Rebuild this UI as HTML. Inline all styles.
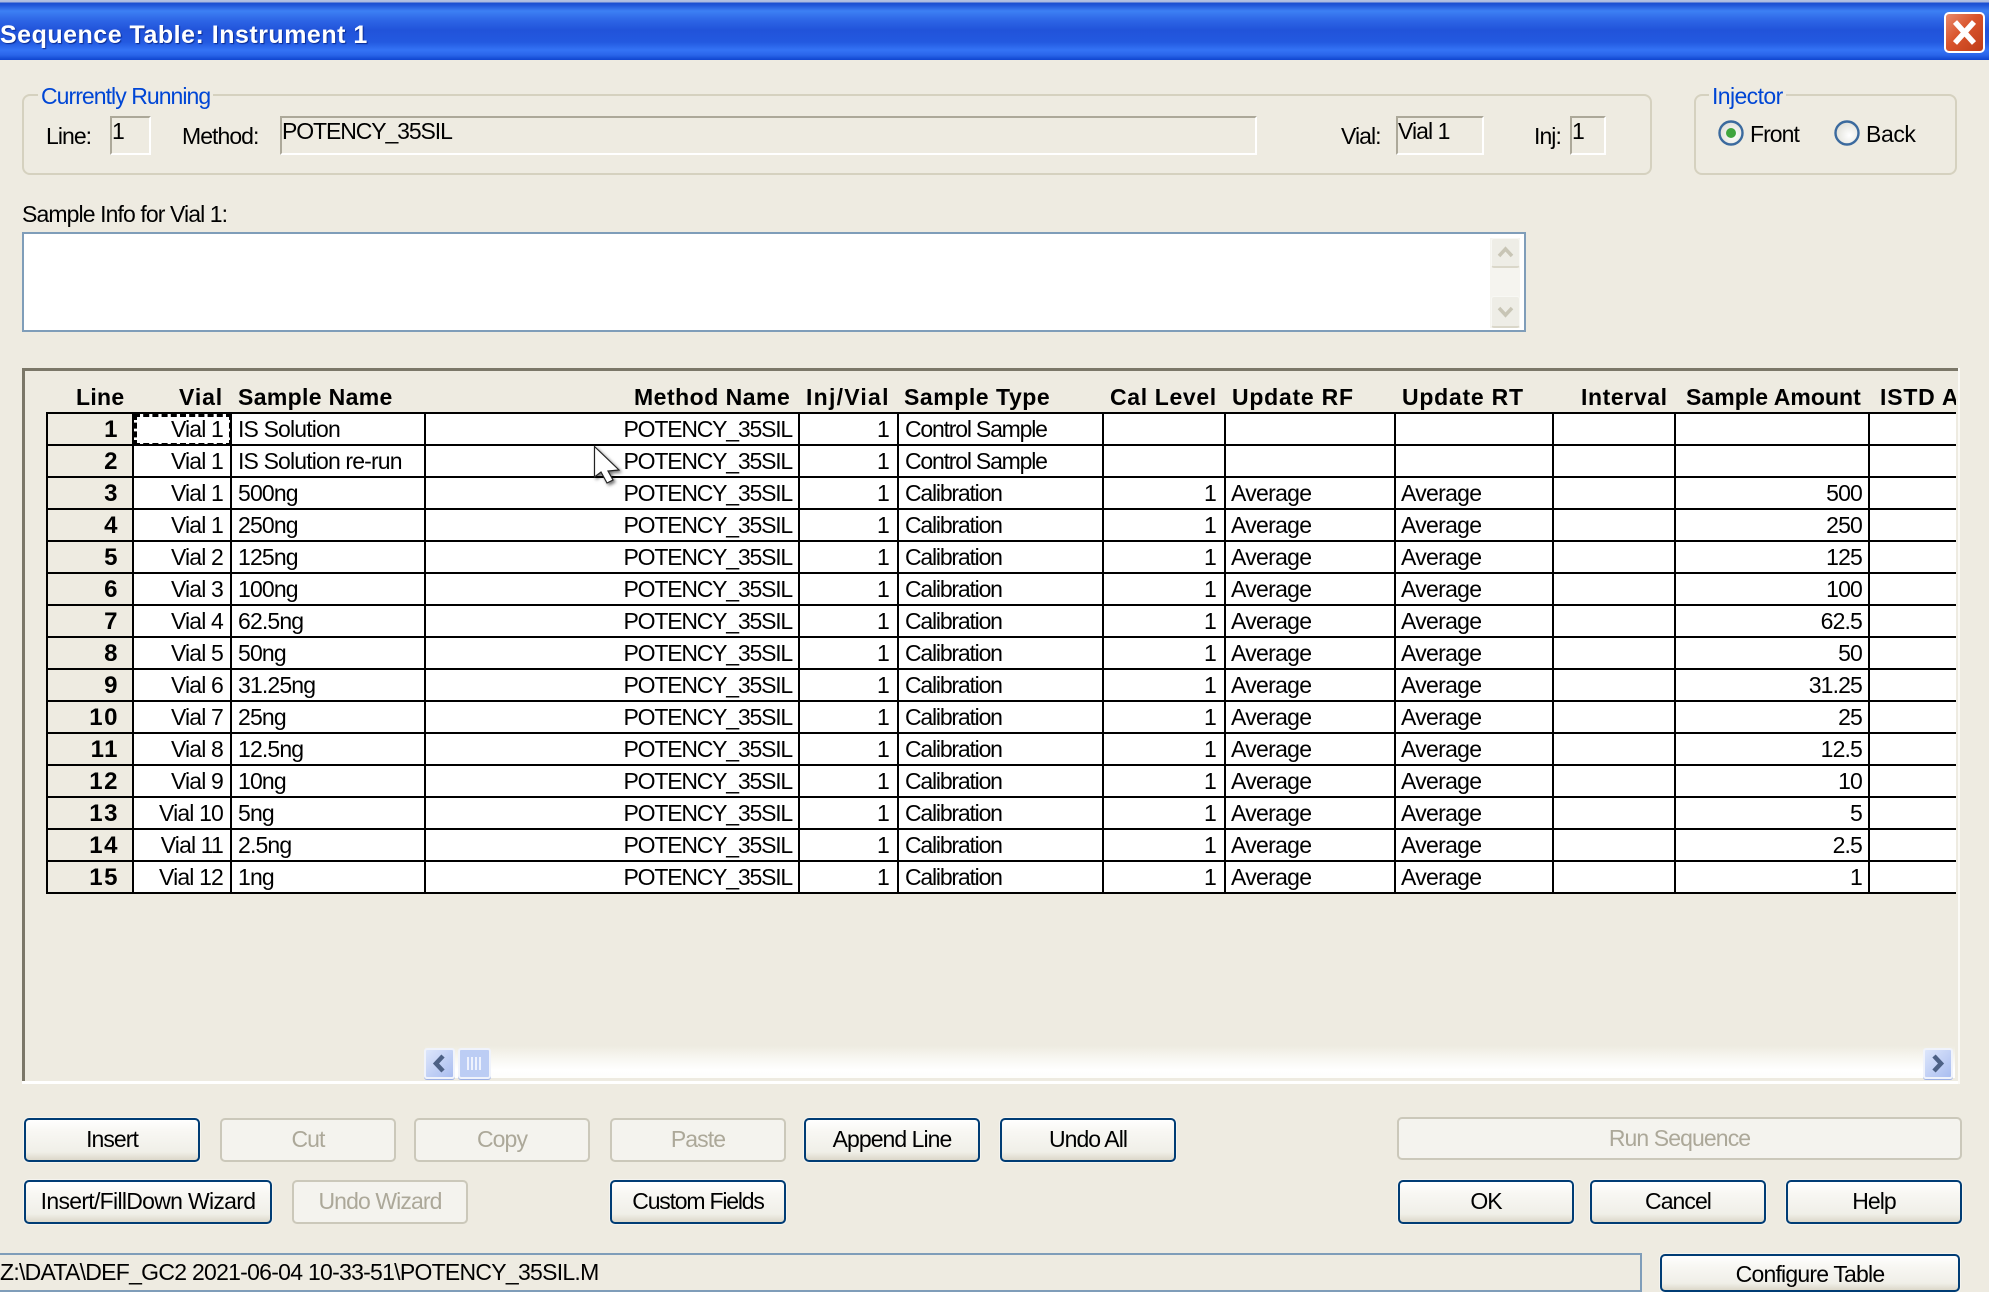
<!DOCTYPE html>
<html>
<head>
<meta charset="utf-8">
<style>
html,body{margin:0;padding:0;background:#eeebe1;}
#p{position:relative;width:1989px;height:1292px;overflow:hidden;background:#eeebe1;font-family:"Liberation Sans",sans-serif;color:#000;}
#p div{position:absolute;box-sizing:border-box;}
.t{white-space:nowrap;font-size:23px;letter-spacing:-.95px;line-height:26px;}
.bl{color:#0046d5;background:#eeebe1;padding:0 3px;}
.gb{border:2px solid #d5d1bf;border-radius:8px;}
.in{border:2px solid;border-color:#aca899 #fff #fff #aca899;background:#eeebe1;}
.h{font-weight:bold;white-space:nowrap;font-size:23px;line-height:26px;top:384px;}
.b{border:2px solid #003c74;border-radius:5px;background:linear-gradient(#fff 0,#f8f7f3 30%,#f0efe8 80%,#dcd8ca 100%);text-align:center;font-size:23px;letter-spacing:-.95px;line-height:38px;white-space:nowrap;box-shadow:0 0 0 1px #f5f4ef;}
.d{border:2px solid #cbc8ba;border-radius:5px;background:#f4f3ee;color:#aca899;text-align:center;font-size:23px;letter-spacing:-.9px;line-height:38px;white-space:nowrap;}
table{border-collapse:separate;border-spacing:0;table-layout:fixed;width:1909px;border-top:2px solid #000;border-left:2px solid #000;background:#fff;}
td{box-sizing:border-box;height:32px;padding:0;border-right:2px solid #000;border-bottom:2px solid #000;font-size:23px;letter-spacing:-.85px;line-height:26px;white-space:nowrap;overflow:hidden;vertical-align:middle;}
td.n{background:#eeebe1;font-weight:bold;font-size:24px;text-align:right;padding-right:13px;padding-top:2px;letter-spacing:1.5px;}
td.v{text-align:right;padding-right:7px;}
td.s{padding-left:6px;}
td.m{text-align:right;padding-right:6px;letter-spacing:-1.2px;}
td.i{text-align:right;padding-right:8px;}
td.y{padding-left:6px;letter-spacing:-1.2px;}
td.c{text-align:right;padding-right:8px;}
td.r{padding-left:5px;letter-spacing:-.7px;}
td.q{padding-left:5px;letter-spacing:-.7px;}
td.a{text-align:right;padding-right:6px;}
td.f{outline:3px dashed #000;outline-offset:-3px;}
td:last-child{border-right:0;}
</style>
</head>
<body>
<div id="p">
<!-- title bar -->
<div style="left:0;top:0;width:1989px;height:60px;background:linear-gradient(#b4c2e2 0,#a9b9e0 2px,#1b4fd0 3px,#1f56d8 5px,#3d80f4 11px,#2e66e6 20px,#2153da 30px,#2359e0 42px,#3473f5 50px,#2a65ea 55px,#0f45cf 60px);"></div>
<div class="t" style="left:0;top:20px;color:#fff;font-weight:bold;font-size:25px;letter-spacing:.5px;line-height:30px;text-shadow:1px 1px 1px #0a2a90;">Sequence Table: Instrument 1</div>
<div style="left:1944px;top:12px;width:41px;height:41px;border:2px solid #fff;border-radius:5px;background:linear-gradient(135deg,#e98a6c 0,#d9542c 45%,#bf3d18 100%);"></div>
<svg style="position:absolute;left:1944px;top:12px" width="41" height="41"><path d="M11 10 L30 31 M30 10 L11 31" stroke="#fff" stroke-width="5.5" fill="none"/></svg>

<!-- Currently Running -->
<div class="gb" style="left:22px;top:94px;width:1630px;height:81px;"></div>
<div class="t bl" style="left:38px;top:83px;">Currently Running</div>
<div class="t" style="left:46px;top:123px;">Line:</div>
<div class="in" style="left:110px;top:116px;width:41px;height:39px;"></div>
<div class="t" style="left:112px;top:118px;">1</div>
<div class="t" style="left:182px;top:123px;">Method:</div>
<div class="in" style="left:280px;top:116px;width:977px;height:39px;"></div>
<div class="t" style="left:282px;top:118px;letter-spacing:-1.1px;">POTENCY_35SIL</div>
<div class="t" style="left:1341px;top:123px;">Vial:</div>
<div class="in" style="left:1396px;top:116px;width:88px;height:39px;"></div>
<div class="t" style="left:1398px;top:118px;">Vial 1</div>
<div class="t" style="left:1534px;top:123px;">Inj:</div>
<div class="in" style="left:1570px;top:116px;width:36px;height:39px;"></div>
<div class="t" style="left:1572px;top:118px;">1</div>

<!-- Injector -->
<div class="gb" style="left:1694px;top:94px;width:263px;height:81px;"></div>
<div class="t bl" style="left:1709px;top:83px;letter-spacing:-.6px;">Injector</div>
<svg style="position:absolute;left:1716px;top:118px" width="30" height="30"><defs><radialGradient id="rg" cx=".6" cy=".6" r=".7"><stop offset="0" stop-color="#fff"/><stop offset="1" stop-color="#dcdcd4"/></radialGradient></defs><circle cx="15" cy="15" r="11.5" fill="url(#rg)" stroke="#3b6a9e" stroke-width="2.4"/><circle cx="15" cy="15" r="5" fill="#3fa53f"/></svg>
<div class="t" style="left:1750px;top:121px;">Front</div>
<svg style="position:absolute;left:1832px;top:118px" width="30" height="30"><circle cx="15" cy="15" r="11.5" fill="url(#rg)" stroke="#3b6a9e" stroke-width="2.4"/></svg>
<div class="t" style="left:1866px;top:121px;letter-spacing:-.4px;">Back</div>

<!-- sample info -->
<div class="t" style="left:22px;top:201px;letter-spacing:-.9px;">Sample Info for Vial 1:</div>
<div style="left:22px;top:232px;width:1504px;height:100px;border:2px solid #7f9db9;background:#fff;"></div>
<div style="left:1490px;top:238px;width:30px;height:90px;background:#f5f4ef;"></div>
<div style="left:1491px;top:238px;width:29px;height:30px;border:1px solid #f8f8f4;border-bottom:2px solid #dad7c9;border-radius:3px;background:#eeede6;"></div>
<svg style="position:absolute;left:1491px;top:238px" width="29" height="30"><path d="M8 18 L14.5 11 L21 18" stroke="#c8c5b5" stroke-width="3.5" fill="none"/></svg>
<div style="left:1491px;top:296px;width:29px;height:32px;border:1px solid #f8f8f4;border-bottom:2px solid #dad7c9;border-radius:3px;background:#eeede6;"></div>
<svg style="position:absolute;left:1491px;top:295px" width="29" height="32"><path d="M8 13 L14.5 20 L21 13" stroke="#c8c5b5" stroke-width="3.5" fill="none"/></svg>

<!-- grid panel -->
<div style="left:22px;top:368px;width:1936px;height:3px;background:#7b7768;"></div>
<div style="left:22px;top:368px;width:3px;height:714px;background:#7b7768;"></div>
<div style="left:22px;top:1081px;width:1938px;height:3px;background:#fff;"></div>
<div style="left:1958px;top:368px;width:2px;height:716px;background:#fbfaf6;"></div>

<div class="h" style="left:76px;letter-spacing:.3px;">Line</div>
<div class="h" style="left:179px;letter-spacing:.9px;">Vial</div>
<div class="h" style="left:238px;letter-spacing:.35px;">Sample Name</div>
<div class="h" style="left:634px;letter-spacing:.5px;">Method Name</div>
<div class="h" style="left:806px;letter-spacing:1.25px;">Inj/Vial</div>
<div class="h" style="left:904px;letter-spacing:.55px;">Sample Type</div>
<div class="h" style="left:1110px;letter-spacing:.65px;">Cal Level</div>
<div class="h" style="left:1232px;letter-spacing:.75px;">Update RF</div>
<div class="h" style="left:1402px;letter-spacing:.75px;">Update RT</div>
<div class="h" style="left:1581px;letter-spacing:.6px;">Interval</div>
<div class="h" style="left:1686px;letter-spacing:.05px;">Sample Amount</div>
<div style="left:1880px;top:384px;width:76px;height:28px;overflow:hidden;"><span class="h" style="position:static;letter-spacing:.8px;">ISTD Amount</span></div>

<div style="left:46px;top:412px;width:1910px;height:484px;overflow:hidden;">
<table>
<colgroup><col style="width:86px"><col style="width:98px"><col style="width:194px"><col style="width:374px"><col style="width:99px"><col style="width:205px"><col style="width:122px"><col style="width:170px"><col style="width:158px"><col style="width:122px"><col style="width:194px"><col style="width:87px"></colgroup>
<tr><td class="n">1</td><td class="v f">Vial 1</td><td class="s">IS Solution</td><td class="m">POTENCY_35SIL</td><td class="i">1</td><td class="y">Control Sample</td><td class="c"></td><td class="r"></td><td class="q"></td><td></td><td class="a"></td><td></td></tr>
<tr><td class="n">2</td><td class="v">Vial 1</td><td class="s">IS Solution re-run</td><td class="m">POTENCY_35SIL</td><td class="i">1</td><td class="y">Control Sample</td><td class="c"></td><td class="r"></td><td class="q"></td><td></td><td class="a"></td><td></td></tr>
<tr><td class="n">3</td><td class="v">Vial 1</td><td class="s">500ng</td><td class="m">POTENCY_35SIL</td><td class="i">1</td><td class="y">Calibration</td><td class="c">1</td><td class="r">Average</td><td class="q">Average</td><td></td><td class="a">500</td><td></td></tr>
<tr><td class="n">4</td><td class="v">Vial 1</td><td class="s">250ng</td><td class="m">POTENCY_35SIL</td><td class="i">1</td><td class="y">Calibration</td><td class="c">1</td><td class="r">Average</td><td class="q">Average</td><td></td><td class="a">250</td><td></td></tr>
<tr><td class="n">5</td><td class="v">Vial 2</td><td class="s">125ng</td><td class="m">POTENCY_35SIL</td><td class="i">1</td><td class="y">Calibration</td><td class="c">1</td><td class="r">Average</td><td class="q">Average</td><td></td><td class="a">125</td><td></td></tr>
<tr><td class="n">6</td><td class="v">Vial 3</td><td class="s">100ng</td><td class="m">POTENCY_35SIL</td><td class="i">1</td><td class="y">Calibration</td><td class="c">1</td><td class="r">Average</td><td class="q">Average</td><td></td><td class="a">100</td><td></td></tr>
<tr><td class="n">7</td><td class="v">Vial 4</td><td class="s">62.5ng</td><td class="m">POTENCY_35SIL</td><td class="i">1</td><td class="y">Calibration</td><td class="c">1</td><td class="r">Average</td><td class="q">Average</td><td></td><td class="a">62.5</td><td></td></tr>
<tr><td class="n">8</td><td class="v">Vial 5</td><td class="s">50ng</td><td class="m">POTENCY_35SIL</td><td class="i">1</td><td class="y">Calibration</td><td class="c">1</td><td class="r">Average</td><td class="q">Average</td><td></td><td class="a">50</td><td></td></tr>
<tr><td class="n">9</td><td class="v">Vial 6</td><td class="s">31.25ng</td><td class="m">POTENCY_35SIL</td><td class="i">1</td><td class="y">Calibration</td><td class="c">1</td><td class="r">Average</td><td class="q">Average</td><td></td><td class="a">31.25</td><td></td></tr>
<tr><td class="n">10</td><td class="v">Vial 7</td><td class="s">25ng</td><td class="m">POTENCY_35SIL</td><td class="i">1</td><td class="y">Calibration</td><td class="c">1</td><td class="r">Average</td><td class="q">Average</td><td></td><td class="a">25</td><td></td></tr>
<tr><td class="n">11</td><td class="v">Vial 8</td><td class="s">12.5ng</td><td class="m">POTENCY_35SIL</td><td class="i">1</td><td class="y">Calibration</td><td class="c">1</td><td class="r">Average</td><td class="q">Average</td><td></td><td class="a">12.5</td><td></td></tr>
<tr><td class="n">12</td><td class="v">Vial 9</td><td class="s">10ng</td><td class="m">POTENCY_35SIL</td><td class="i">1</td><td class="y">Calibration</td><td class="c">1</td><td class="r">Average</td><td class="q">Average</td><td></td><td class="a">10</td><td></td></tr>
<tr><td class="n">13</td><td class="v">Vial 10</td><td class="s">5ng</td><td class="m">POTENCY_35SIL</td><td class="i">1</td><td class="y">Calibration</td><td class="c">1</td><td class="r">Average</td><td class="q">Average</td><td></td><td class="a">5</td><td></td></tr>
<tr><td class="n">14</td><td class="v">Vial 11</td><td class="s">2.5ng</td><td class="m">POTENCY_35SIL</td><td class="i">1</td><td class="y">Calibration</td><td class="c">1</td><td class="r">Average</td><td class="q">Average</td><td></td><td class="a">2.5</td><td></td></tr>
<tr><td class="n">15</td><td class="v">Vial 12</td><td class="s">1ng</td><td class="m">POTENCY_35SIL</td><td class="i">1</td><td class="y">Calibration</td><td class="c">1</td><td class="r">Average</td><td class="q">Average</td><td></td><td class="a">1</td><td></td></tr>
</table>
</div>

<!-- cursor -->
<svg style="position:absolute;left:592px;top:444px;filter:drop-shadow(2px 2px 1.5px rgba(0,0,0,.55))" width="34" height="44"><path d="M2.5 2.5 V33 L9 28 L15 39 L21 36 L16 27 L27 26 Z" fill="#fff" stroke="#222" stroke-width="1.2"/></svg>

<!-- horizontal scrollbar -->
<div style="left:425px;top:1046px;width:1530px;height:32px;background:linear-gradient(#eeebe1 0,#f7f6f0 35%,#fff 75%,#fefefc 100%);"></div>
<div style="left:424px;top:1048px;width:31px;height:31px;border:2px solid #f0f3fb;border-radius:3px;background:linear-gradient(135deg,#dde6fb,#a9bdf0);box-shadow:0 1px 0 #9cb0e4;"></div>
<svg style="position:absolute;left:424px;top:1048px" width="31" height="31"><path d="M19 8 L12 15.5 L19 23" stroke="#4d6185" stroke-width="4.5" fill="none"/></svg>
<div style="left:458px;top:1048px;width:33px;height:31px;border:2px solid #f0f3fb;border-radius:3px;background:#bccdf4;box-shadow:0 1px 0 #9cb0e4;"></div>
<svg style="position:absolute;left:458px;top:1048px" width="33" height="31"><path d="M10 9 V22 M14 9 V22 M18 9 V22 M22 9 V22" stroke="#eef2fd" stroke-width="2" fill="none"/></svg>
<div style="left:1923px;top:1048px;width:30px;height:31px;border:2px solid #f0f3fb;border-radius:3px;background:linear-gradient(135deg,#dde6fb,#a9bdf0);box-shadow:0 1px 0 #9cb0e4;"></div>
<svg style="position:absolute;left:1923px;top:1048px" width="30" height="31"><path d="M11 8 L18 15.5 L11 23" stroke="#4d6185" stroke-width="4.5" fill="none"/></svg>

<!-- buttons -->
<div class="b" style="left:24px;top:1118px;width:176px;height:44px;">Insert</div>
<div class="d" style="left:220px;top:1118px;width:176px;height:44px;">Cut</div>
<div class="d" style="left:414px;top:1118px;width:176px;height:44px;">Copy</div>
<div class="d" style="left:610px;top:1118px;width:176px;height:44px;">Paste</div>
<div class="b" style="left:804px;top:1118px;width:176px;height:44px;">Append Line</div>
<div class="b" style="left:1000px;top:1118px;width:176px;height:44px;">Undo All</div>
<div class="d" style="left:1397px;top:1117px;width:565px;height:43px;">Run Sequence</div>
<div class="b" style="left:24px;top:1180px;width:248px;height:44px;letter-spacing:-.7px;">Insert/FillDown Wizard</div>
<div class="d" style="left:292px;top:1180px;width:176px;height:44px;">Undo Wizard</div>
<div class="b" style="left:610px;top:1180px;width:176px;height:44px;letter-spacing:-1.2px;">Custom Fields</div>
<div class="b" style="left:1398px;top:1180px;width:176px;height:44px;">OK</div>
<div class="b" style="left:1590px;top:1180px;width:176px;height:44px;">Cancel</div>
<div class="b" style="left:1786px;top:1180px;width:176px;height:44px;">Help</div>

<!-- status -->
<div style="left:-2px;top:1253px;width:1644px;height:39px;border:2px solid #7f9db9;background:#eeebe1;"></div>
<div class="t" style="left:0;top:1259px;letter-spacing:-.73px;">Z:\DATA\DEF_GC2 2021-06-04 10-33-51\POTENCY_35SIL.M</div>
<div class="b" style="left:1660px;top:1254px;width:300px;height:38px;line-height:36px;letter-spacing:-.8px;">Configure Table</div>
</div>
</body>
</html>
